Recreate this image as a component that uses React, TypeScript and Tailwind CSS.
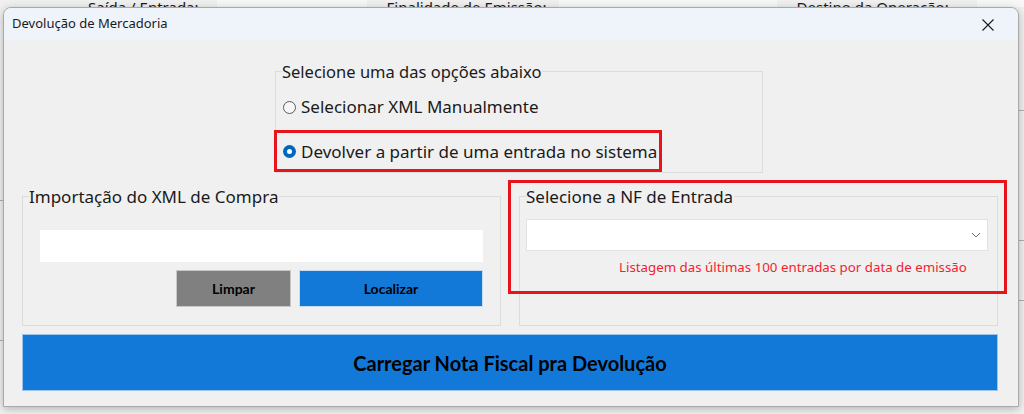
import React from "react";

const ui = { fontFamily: "'Noto Sans', 'Open Sans', sans-serif" };
const narrow: React.CSSProperties = {
  fontFamily: "Lato, 'Liberation Sans', sans-serif",
};

function Radio({ checked }: { checked?: boolean }) {
  return checked ? (
    <span className="flex h-[13px] w-[13px] shrink-0 items-center justify-center rounded-full bg-[#0067c0]">
      <span className="h-[5px] w-[5px] rounded-full bg-white" />
    </span>
  ) : (
    <span className="h-[13px] w-[13px] shrink-0 rounded-full border border-[#5a5a5a] bg-[#f7f7f7]" />
  );
}

function GroupTitle({ children, size }: { children: React.ReactNode; size: "md" | "lg" }) {
  return (
    <div
      className={
        size === "lg"
          ? "-mt-[12px] ml-[6px] self-start whitespace-nowrap bg-[#f0f0f0] pr-[1px] text-[17px] leading-[24px] text-[#1a1a1a]"
          : "-mt-[11px] ml-[6px] self-start whitespace-nowrap bg-[#f0f0f0] pr-[1px] text-[16.5px] leading-[22px] text-[#1a1a1a]"
      }
    >
      {children}
    </div>
  );
}

export default function App() {
  return (
    <div className="relative h-[414px] w-[1024px] overflow-hidden bg-[#f0f0f0]" style={ui}>
      {/* background application strip */}
      <div className="flex h-[7px] items-end overflow-hidden whitespace-nowrap text-[15px] leading-[18px] text-[#1a1a1a]">
        <div className="flex h-[18px] w-full shrink-0 items-center" style={{ marginBottom: -9 }}>
          <span className="ml-[88px] shrink-0">Saída / Entrada:</span>
          <span className="ml-[18px] h-[18px] w-[150px] shrink-0 border-b-2 border-[#a0a0a0] bg-[#f7f7f7]" />
          <span className="ml-[20px] shrink-0">Finalidade de Emissão:</span>
          <span className="ml-[12px] h-[18px] w-[218px] shrink-0 border-b-2 border-[#a0a0a0] bg-[#f7f7f7]" />
          <span className="ml-[20px] shrink-0">Destino da Operação:</span>
          <span className="ml-[28px] h-[18px] w-[90px] shrink-0 border-b-2 border-[#a0a0a0] bg-[#f7f7f7]" />
        </div>
      </div>
      <div className="absolute left-0 top-[200px] h-px w-[3px] bg-[#b0b0b0]" />
      <div className="absolute left-0 top-[340px] h-px w-[3px] bg-[#b0b0b0]" />
      <div className="absolute right-0 top-[110px] h-px w-[5px] bg-[#b0b0b0]" />
      <div className="absolute right-0 top-[240px] h-px w-[5px] bg-[#b0b0b0]" />
      <div className="absolute right-0 top-[300px] h-px w-[5px] bg-[#b0b0b0]" />

      {/* dialog window */}
      <div className="absolute left-[3px] top-[7px] flex h-[400px] w-[1016px] flex-col overflow-hidden rounded-t-[8px] border border-[#a9a9a9] bg-[#f0f0f0] shadow-[0_2px_8px_rgba(0,0,0,0.25)]">
        <div className="flex h-[32px] shrink-0 items-center justify-between bg-[#eff3fa] pl-[8px] pr-[23px]">
          <span className="text-[13px] text-[#1a1a1a]">Devolução de Mercadoria</span>
          <svg width="14" height="14" viewBox="0 0 14 14" className="mt-[1px]">
            <path d="M1.5 1.5 L12.5 12.5 M12.5 1.5 L1.5 12.5" stroke="#1a1a1a" strokeWidth="1.1" />
          </svg>
        </div>

        <div className="flex flex-1 flex-col pl-[18px] pr-[20px] pt-[31px]">
          {/* options group */}
          <div className="ml-[253px] flex h-[102px] w-[488px] flex-col border border-[#dcdcdc]">
            <GroupTitle size="md">Selecione uma das opções abaixo</GroupTitle>
            <div className="ml-[7px] mt-[13px] flex items-center gap-[5px] text-[17px] leading-[22px] text-[#1a1a1a]">
              <Radio />
              <span>Selecionar XML Manualmente</span>
            </div>
            <div className="-ml-[2px] mt-[12px] flex h-[44px] w-[388px] items-center gap-[5px] border-[3px] border-[#e8141c] pl-[6px] text-[17px] leading-[22px] text-[#1a1a1a]">
              <Radio checked />
              <span className="mt-[2px]">Devolver a partir de uma entrada no sistema</span>
            </div>
          </div>

          {/* two groups */}
          <div className="mt-[23px] flex gap-[18px]">
            <div className="flex h-[130px] w-[479px] flex-col border border-[#dcdcdc]">
              <GroupTitle size="lg">Importação do XML de Compra</GroupTitle>
              <div className="mx-[17px] mt-[21px] h-[32px] bg-white" />
              <div className="mr-[17px] mt-[8px] flex justify-end gap-[8px]" style={narrow}>
                <button className="h-[37px] w-[115px] border border-[#c8c8c8] bg-[#808080] text-[14px] font-bold text-black">
                  Limpar
                </button>
                <button className="h-[37px] w-[184px] border border-[#c8dcf0] bg-[#1279d9] text-[14px] font-bold text-black">
                  Localizar
                </button>
              </div>
            </div>

            <div className="relative flex h-[130px] w-[479px] flex-col border border-[#dcdcdc]">
              <GroupTitle size="lg">Selecione a NF de Entrada</GroupTitle>
              <div className="ml-[6px] mr-[9px] mt-[10px] flex h-[32px] items-center justify-end border border-[#e2e2e2] bg-white pr-[6px]">
                <svg width="10" height="6" viewBox="0 0 10 6">
                  <path d="M1 1 L5 5 L9 1" fill="none" stroke="#707070" strokeWidth="1" />
                </svg>
              </div>
              <div className="ml-[99px] mt-[7px] text-[13.3px] leading-[18px] text-[#f5222d]">
                Listagem das últimas 100 entradas por data de emissão
              </div>
              <div className="pointer-events-none absolute left-[-12px] top-[-17px] h-[114px] w-[499px] border-[3px] border-[#e8141c]" />
            </div>
          </div>

          {/* main button */}
          <button
            className="mt-[8px] h-[57px] w-full border border-[#9cc4ec] bg-[#1279d9] text-[20px] font-bold text-black"
            style={narrow}
          >
            Carregar Nota Fiscal pra Devolução
          </button>
        </div>
      </div>
    </div>
  );
}
